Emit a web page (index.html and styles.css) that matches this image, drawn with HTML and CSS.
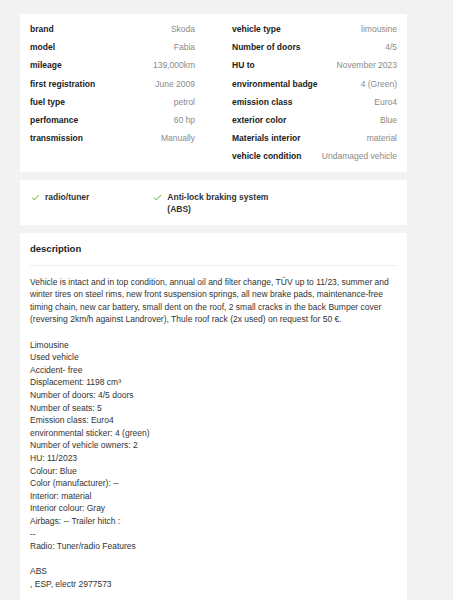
FILE: index.html
```html
<!DOCTYPE html>
<html>
    <head>
        <link rel="stylesheet" href="styles.css">
    </head>
    <body>
        <div class="card specs">
            <div class="speccol">
                <div class="specrow"><span class="label">brand</span><span class="value">Skoda</span></div>
                <div class="specrow"><span class="label">model</span><span class="value">Fabia</span></div>
                <div class="specrow"><span class="label">mileage</span><span class="value">139,000km</span></div>
                <div class="specrow"><span class="label">first registration</span><span class="value">June 2009</span></div>
                <div class="specrow"><span class="label">fuel type</span><span class="value">petrol</span></div>
                <div class="specrow"><span class="label">perfomance</span><span class="value">60 hp</span></div>
                <div class="specrow"><span class="label">transmission</span><span class="value">Manually</span></div>
            </div>
            <div class="speccol">
                <div class="specrow"><span class="label">vehicle type</span><span class="value">limousine</span></div>
                <div class="specrow"><span class="label">Number of doors</span><span class="value">4/5</span></div>
                <div class="specrow"><span class="label">HU to</span><span class="value">November 2023</span></div>
                <div class="specrow"><span class="label">environmental badge</span><span class="value">4 (Green)</span></div>
                <div class="specrow"><span class="label">emission class</span><span class="value">Euro4</span></div>
                <div class="specrow"><span class="label">exterior color</span><span class="value">Blue</span></div>
                <div class="specrow"><span class="label">Materials interior</span><span class="value">material</span></div>
                <div class="specrow"><span class="label">vehicle condition</span><span class="value">Undamaged vehicle</span></div>
            </div>
        </div>
        <div class="card features">
            <div class="feature">
                <svg class="check" viewBox="0 0 10 8"><path d="M1 4.2 L3.6 6.6 L9 1.2" fill="none" stroke="#8cc152" stroke-width="1.2"/></svg>
                <span>radio/tuner</span>
            </div>
            <div class="feature">
                <svg class="check" viewBox="0 0 10 8"><path d="M1 4.2 L3.6 6.6 L9 1.2" fill="none" stroke="#8cc152" stroke-width="1.2"/></svg>
                <span>Anti-lock braking system (ABS)</span>
            </div>
        </div>
        <div class="card description">
            <h2>description</h2>
            <hr class="divider">
            <p>Vehicle is intact and in top condition, annual oil and filter change, TÜV up to 11/23, summer and winter tires on steel rims, new front suspension springs, all new brake pads, maintenance-free timing chain, new car battery, small dent on the roof, 2 small cracks in the back Bumper cover (reversing 2km/h against Landrover), Thule roof rack (2x used) on request for 50 €.<br>
<br>
Limousine<br>
Used vehicle<br>
Accident- free<br>
Displacement: 1198 cm³<br>
Number of doors: 4/5 doors<br>
Number of seats: 5<br>
Emission class: Euro4<br>
environmental sticker: 4 (green)<br>
Number of vehicle owners: 2<br>
HU: 11/2023<br>
Colour: Blue<br>
Color (manufacturer): --<br>
Interior: material<br>
Interior colour: Gray<br>
Airbags: -- Trailer hitch :<br>
--<br>
Radio: Tuner/radio Features<br>
<br>
ABS<br>
, ESP, electr 2977573</p>
        </div>
    </body>
</html>
```

FILE: styles.css
```css
body {
    margin: 0;
    padding: 14px 46px 0 20px;
    background-color: #f2f2f2;
    font-family: 'Liberation Sans', Arial, sans-serif;
    color: #222222;
    overflow: hidden;
}
.card {
    background-color: #ffffff;
    padding: 0 10px;
    margin-bottom: 8px;
}
.specs {
    display: grid;
    grid-template-columns: 1fr 1fr;
    column-gap: 37px;
    padding-top: 6px;
    padding-bottom: 6px;
}
.specrow {
    display: flex;
    justify-content: space-between;
    font-size: 8.5px;
    line-height: 18.2px;
}
.label {
    font-weight: bold;
    color: #222222;
}
.value {
    color: #8a8a8a;
}
.features {
    display: grid;
    grid-template-columns: repeat(3, 1fr);
    padding-top: 11px;
    padding-bottom: 10px;
}
.feature {
    display: flex;
    align-items: flex-start;
    font-size: 8.5px;
    line-height: 12px;
    font-weight: bold;
    color: #333333;
}
.check {
    width: 9px;
    height: 7px;
    margin: 3px 5px 0 1px;
    flex-shrink: 0;
}
.description {
    padding-top: 10px;
    padding-bottom: 20px;
}
h2 {
    font-size: 9.5px;
    line-height: 12px;
    font-weight: bold;
    color: #222222;
    margin: 0;
}
hr.divider {
    border: none;
    border-top: 1px solid #eeeeee;
    margin: 10px 0 10px 0;
}
p {
    font-size: 8.5px;
    line-height: 12.6px;
    color: #333333;
    margin: 0;
}
```
